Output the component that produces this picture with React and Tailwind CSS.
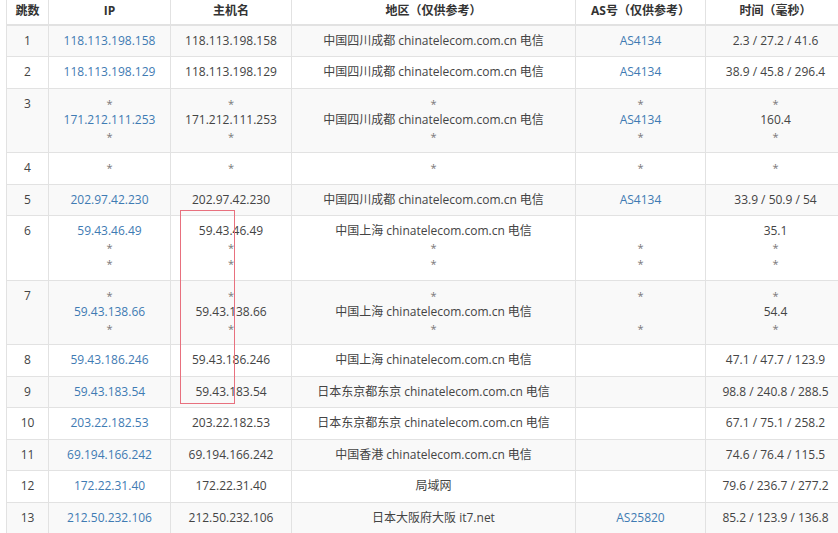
import React from 'react'

const cols = [
  { title: '跳数', w: 'w-[42px]' },
  { title: 'IP', w: 'w-[122px]' },
  { title: '主机名', w: 'w-[121px]' },
  { title: '地区（仅供参考）', w: 'w-[284px]' },
  { title: 'AS号（仅供参考）', w: 'w-[130px]' },
  { title: '时间（毫秒）', w: 'w-[140px]' },
]

const cn = '中国四川成都 chinatelecom.com.cn 电信'
const sh = '中国上海 chinatelecom.com.cn 电信'
const jp = '日本东京都东京 chinatelecom.com.cn 电信'

// each cell is a list of lines
const hops = [
  [['118.113.198.158'], ['118.113.198.158'], [cn], ['AS4134'], ['2.3 / 27.2 / 41.6']],
  [['118.113.198.129'], ['118.113.198.129'], [cn], ['AS4134'], ['38.9 / 45.8 / 296.4']],
  [['*', '171.212.111.253', '*'], ['*', '171.212.111.253', '*'], ['*', cn, '*'], ['*', 'AS4134', '*'], ['*', '160.4', '*']],
  [['*'], ['*'], ['*'], ['*'], ['*']],
  [['202.97.42.230'], ['202.97.42.230'], [cn], ['AS4134'], ['33.9 / 50.9 / 54']],
  [['59.43.46.49', '*', '*'], ['59.43.46.49', '*', '*'], [sh, '*', '*'], ['', '*', '*'], ['35.1', '*', '*']],
  [['*', '59.43.138.66', '*'], ['*', '59.43.138.66', '*'], ['*', sh, '*'], ['*', '', '*'], ['*', '54.4', '*']],
  [['59.43.186.246'], ['59.43.186.246'], [sh], [''], ['47.1 / 47.7 / 123.9']],
  [['59.43.183.54'], ['59.43.183.54'], [jp], [''], ['98.8 / 240.8 / 288.5']],
  [['203.22.182.53'], ['203.22.182.53'], [jp], [''], ['67.1 / 75.1 / 258.2']],
  [['69.194.166.242'], ['69.194.166.242'], ['中国香港 chinatelecom.com.cn 电信'], [''], ['74.6 / 76.4 / 115.5']],
  [['172.22.31.40'], ['172.22.31.40'], ['局域网'], [''], ['79.6 / 236.7 / 277.2']],
  [['212.50.232.106'], ['212.50.232.106'], ['日本大阪府大阪 it7.net'], ['AS25820'], ['85.2 / 123.9 / 136.8']],
]

const linkCols = [0, 3]

const Line = ({ text, link }) => {
  if (text === '') return <div className="h-[16.5px]" />
  if (text === '*') return <div className="text-[11px] text-[#777]">*</div>
  return <div className={link ? 'text-[#3f7bb3]' : ''}>{text}</div>
}

const App = () => {
  return (
    <div
      className="w-[838px] h-[533px] overflow-hidden bg-white pl-[6px] text-[12px] leading-[16.5px] text-[#444]"
      style={{ fontFamily: '"Open Sans", "Noto Sans CJK SC", sans-serif' }}
    >
      <div className="relative w-[839px]">
        <table className="w-[839px] table-fixed border-collapse">
          <thead>
            <tr>
              {cols.map((c) => (
                <th
                  key={c.title}
                  className={`${c.w} border-x border-b-2 border-[#e2e2e2] pt-[3px] pb-[4px] text-center font-bold text-[#333]`}
                >
                  {c.title}
                </th>
              ))}
            </tr>
          </thead>
          <tbody>
            {hops.map((row, i) => (
              <tr key={i} className={i % 2 === 0 ? 'bg-[#f9f9f9]' : 'bg-white'}>
                <td className="border border-[#e2e2e2] py-[7px] text-center align-top">{i + 1}</td>
                {row.map((cell, j) => (
                  <td key={j} className="border border-[#e2e2e2] py-[7px] text-center align-top whitespace-nowrap">
                    {cell.map((line, k) => (
                      <Line key={k} text={line} link={linkCols.includes(j)} />
                    ))}
                  </td>
                ))}
              </tr>
            ))}
          </tbody>
        </table>
        {/* red highlight box drawn over the hostname column */}
        <div className="absolute left-[174px] top-[210px] w-[55px] h-[194px] border border-[#e8707e]" />
      </div>
    </div>
  )
}

export default App
